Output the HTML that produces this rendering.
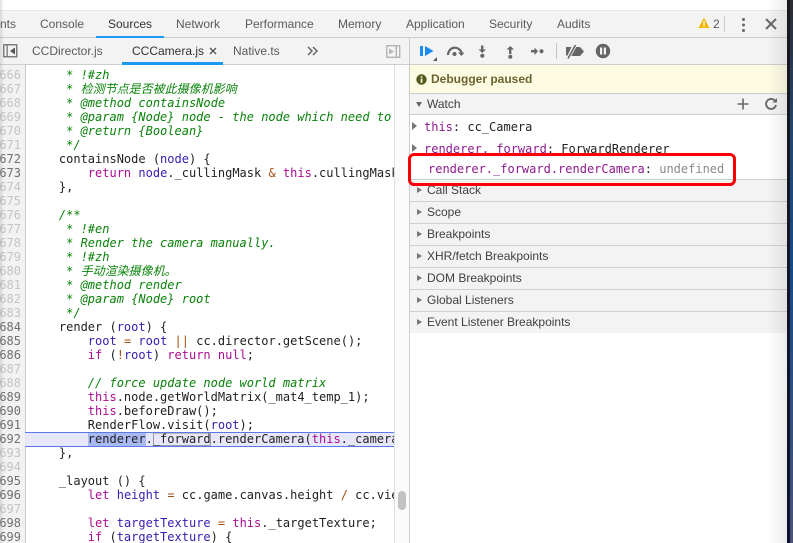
<!DOCTYPE html>
<html style="height:543px;overflow:hidden"><head><meta charset="utf-8">
<style>
html,body{margin:0;padding:0}
body{width:793px;height:543px;overflow:hidden;position:relative;background:#fff;font-family:"Liberation Sans","Noto Sans CJK SC",sans-serif;font-size:12px;color:#5a5a5a}
.a{position:absolute}
.t{position:absolute;white-space:nowrap;line-height:14px}
.m{font-family:"DejaVu Sans Mono","Liberation Mono","Noto Sans CJK SC",monospace;font-size:12px}
#code{position:absolute;left:30px;top:68px;height:475px;overflow:hidden;line-height:14px;color:#222;font-family:"DejaVu Sans Mono","Liberation Mono",monospace;font-size:12px}
#code div{height:14px;width:364px;overflow:hidden;white-space:pre}
#nums{position:absolute;left:0;top:68px;width:21px;text-align:right;line-height:14px;color:#c4c4c4;font-family:"DejaVu Sans Mono",monospace;font-size:12px}
#nums div{height:14px;direction:rtl}
#nums b{font-weight:normal;color:#707070}
.c{color:#0a820a;font-style:italic;font-family:"DejaVu Sans Mono","Noto Sans CJK SC",monospace}
.k{color:#aa0d91}
.v{color:#3a1bb0}
.o{color:#a8500f}
.sec{position:absolute;left:410px;width:377px;height:21px;background:#f3f3f3;border-top:1px solid #d0d0d0;line-height:21px;color:#3f3f3f}
.sec span{position:absolute;left:17px;top:0}
.sec i{position:absolute;left:7px;top:7px;width:0;height:0;border-left:5px solid #777;border-top:3.5px solid transparent;border-bottom:3.5px solid transparent}
.w{color:#8f1a8f}
</style></head>
<body>
<!-- top bar -->
<div class="a" style="left:0;top:10px;width:787px;height:27px;background:#f3f3f3;border-top:1px solid #e6e6e6;box-sizing:border-box"></div>
<div class="a" style="left:0;top:37px;width:787px;height:1px;background:#cdcdcd"></div>
<div class="t" style="left:0;top:17px">nts</div>
<div class="t" style="left:40px;top:17px">Console</div>
<div class="t" style="left:108px;top:17px;color:#333">Sources</div>
<div class="t" style="left:176px;top:17px">Network</div>
<div class="t" style="left:245px;top:17px">Performance</div>
<div class="t" style="left:338px;top:17px">Memory</div>
<div class="t" style="left:406px;top:17px">Application</div>
<div class="t" style="left:489px;top:17px">Security</div>
<div class="t" style="left:557px;top:17px">Audits</div>
<div class="a" style="left:96px;top:36px;width:68px;height:2px;background:#1a9bf0"></div>
<svg class="a" style="left:698px;top:17px" width="12" height="12" viewBox="0 0 12 12"><path d="M6 .8 11.5 11H.5z" fill="#f4b400"/><rect x="5.4" y="4" width="1.3" height="4" fill="#fff"/><rect x="5.4" y="8.7" width="1.3" height="1.3" fill="#fff"/></svg>
<div class="t" style="left:713px;top:17px">2</div>
<div class="a" style="left:724px;top:16px;width:1px;height:16px;background:#ccc"></div>
<div class="a" style="left:742px;top:18px;width:3px;height:3px;border-radius:2px;background:#666;box-shadow:0 5.5px 0 #666,0 11px 0 #666"></div>
<svg class="a" style="left:765px;top:18px" width="12" height="12" viewBox="0 0 12 12"><path d="M1 1 11 11M11 1 1 11" stroke="#666" stroke-width="2"/></svg>

<!-- second row left -->
<div class="a" style="left:0;top:38px;width:409px;height:26px;background:#f3f3f3"></div>
<div class="a" style="left:0;top:64px;width:409px;height:1px;background:#cdcdcd"></div>
<svg class="a" style="left:3px;top:44px" width="16" height="14" viewBox="0 0 16 14"><rect x=".75" y=".75" width="13" height="12" fill="none" stroke="#777" stroke-width="1.4"/><rect x="3.5" y="1" width="1.3" height="12" fill="#777"/><path d="M12 3.5v7L7 7z" fill="#555"/></svg>
<div class="t" style="left:32px;top:44px">CCDirector.js</div>
<div class="t" style="left:132px;top:44px;color:#333">CCCamera.js</div>
<svg class="a" style="left:209px;top:47px" width="8" height="8" viewBox="0 0 8 8"><path d="M1 1 7 7M7 1 1 7" stroke="#555" stroke-width="1.4"/></svg>
<div class="t" style="left:233px;top:44px">Native.ts</div>
<svg class="a" style="left:307px;top:46px" width="11" height="10" viewBox="0 0 11 10"><path d="M1 1 5 5 1 9M6 1 10 5 6 9" fill="none" stroke="#666" stroke-width="1.5"/></svg>
<div class="a" style="left:122px;top:62px;width:101px;height:3px;background:#1a9bf0"></div>
<svg class="a" style="left:386px;top:45px" width="15" height="13" viewBox="0 0 15 13"><rect x=".75" y=".75" width="13" height="11.5" fill="none" stroke="#aaa" stroke-width="1.2"/><rect x="9.7" y="1" width="1.2" height="11" fill="#aaa"/><path d="M3 3.5v6L8 6.500z" fill="#b5b5b5"/></svg>

<!-- gutter -->
<div class="a" style="left:0;top:65px;width:25px;height:478px;background:#f2f2f2;border-right:1px solid #c8c8c8"></div>
<!-- highlighted line -->
<div class="a" style="left:25px;top:432px;width:369px;height:15px;background:#e7e7fb;border-top:1px solid #5a78e6;border-bottom:1px solid #5a78e6;box-sizing:border-box"></div>
<div class="a" style="left:88px;top:433px;width:58px;height:13px;background:#a9b9f2"></div>
<div class="a" style="left:153px;top:433px;width:58px;height:13px;border:1px solid #9a9aaa;border-top:1px solid #bbb;box-sizing:border-box;background:#e7e7fb"></div>

<div id="nums"><div>666</div><div>667</div><div>668</div><div>669</div><div>670</div><div>671</div><div><b>672</b></div><div><b>673</b></div><div>674</div><div>675</div><div>676</div><div>677</div><div>678</div><div>679</div><div>680</div><div>681</div><div>682</div><div>683</div><div><b>684</b></div><div><b>685</b></div><div><b>686</b></div><div>687</div><div>688</div><div><b>689</b></div><div><b>690</b></div><div><b>691</b></div><div><b>692</b></div><div>693</div><div>694</div><div><b>695</b></div><div><b>696</b></div><div>697</div><div><b>698</b></div><div><b>699</b></div></div>

<div id="code"><div class="c">     * !#zh</div>
<div class="c">     * 检测节点是否被此摄像机影响</div>
<div class="c">     * @method containsNode</div>
<div class="c">     * @param {Node} node - the node which need to</div>
<div class="c">     * @return {Boolean}</div>
<div class="c">     */</div>
<div>    containsNode (<span class="v">node</span>) {</div>
<div>        <span class="k">return</span> <span class="v">node</span>._cullingMask <span class="o">&amp;</span> <span class="k">this</span>.cullingMask</div>
<div>    },</div>
<div> </div>
<div class="c">    /**</div>
<div class="c">     * !#en</div>
<div class="c">     * Render the camera manually.</div>
<div class="c">     * !#zh</div>
<div class="c">     * 手动渲染摄像机。</div>
<div class="c">     * @method render</div>
<div class="c">     * @param {Node} root</div>
<div class="c">     */</div>
<div>    render (<span class="v">root</span>) {</div>
<div>        <span class="v">root</span> <span class="o">=</span> <span class="v">root</span> <span class="o">||</span> cc.director.getScene();</div>
<div>        <span class="k">if</span> (<span class="o">!</span><span class="v">root</span>) <span class="k">return</span> <span class="k">null</span>;</div>
<div> </div>
<div class="c">        // force update node world matrix</div>
<div>        <span class="k">this</span>.node.getWorldMatrix(_mat4_temp_1);</div>
<div>        <span class="k">this</span>.beforeDraw();</div>
<div>        RenderFlow.visit(<span class="v">root</span>);</div>
<div>        renderer._forward.renderCamera(<span class="k">this</span>._camera</div>
<div>    },</div>
<div> </div>
<div>    _layout () {</div>
<div>        <span class="k">let</span> <span class="v">height</span> <span class="o">=</span> cc.game.canvas.height <span class="o">/</span> cc.view</div>
<div> </div>
<div>        <span class="k">let</span> <span class="v">targetTexture</span> <span class="o">=</span> <span class="k">this</span>._targetTexture;</div>
<div>        <span class="k">if</span> (<span class="v">targetTexture</span>) {</div></div>

<!-- code scrollbar -->
<div class="a" style="left:394px;top:65px;width:15px;height:478px;background:#fafafa;border-left:1px solid #e0e0e0;box-sizing:border-box"></div>
<div class="a" style="left:398px;top:491px;width:8px;height:19px;border-radius:4px;background:#c2c2c2"></div>

<!-- right pane -->
<div class="a" style="left:409px;top:38px;width:1px;height:505px;background:#cdcdcd"></div>
<div class="a" style="left:410px;top:38px;width:377px;height:26px;background:#f3f3f3"></div>
<div class="a" style="left:410px;top:64px;width:377px;height:1px;background:#cdcdcd"></div>
<svg class="a" style="left:418px;top:42px" width="200" height="20" viewBox="418 42 200 20">
<rect x="420" y="46" width="3" height="10" fill="#1a8cf0"/><path d="M425 46v10l8.500-5z" fill="#1a8cf0"/>
<path d="M437 57v4h-4z" fill="#555"/>
<path d="M448 55c.5-9 11-9.500 13.500-2.500" fill="none" stroke="#666" stroke-width="2.200"/><path d="M458 52.500h6.500l-3 3.500z" fill="#666"/><circle cx="454.500" cy="54" r="2" fill="#666"/>
<rect x="481" y="45.500" width="2.400" height="5" fill="#666"/><path d="M478.500 49.500h7.500l-3.750 3.500z" fill="#666"/><circle cx="482.300" cy="55.800" r="2" fill="#666"/>
<path d="M506.500 49.500h7.500l-3.750-3.500z" fill="#666"/><rect x="509" y="49" width="2.400" height="5" fill="#666"/><circle cx="510.300" cy="56.800" r="2" fill="#666"/>
<rect x="531" y="50" width="4" height="2.400" fill="#666"/><path d="M534.500 47.500v7.500l3.500-3.750z" fill="#666"/><circle cx="541.500" cy="51.200" r="2" fill="#666"/>
<rect x="556" y="43" width="1" height="16" fill="#c4c4c4"/>
<path d="M566 47h5.500l-4 8.500H566zM574 47h6l4 4.500-4 4.500h-10z" fill="#666"/><path d="M577 44.500 569 59" stroke="#f3f3f3" stroke-width="1.200"/><path d="M575.500 45 568 58.500" stroke="#666" stroke-width="1.600"/>
<circle cx="603" cy="51" r="7.200" fill="#666"/><rect x="600" y="47.500" width="2.200" height="7" fill="#f3f3f3"/><rect x="603.800" y="47.500" width="2.200" height="7" fill="#f3f3f3"/>
</svg>
<!-- paused banner -->
<div class="a" style="left:410px;top:65px;width:377px;height:28px;background:#fefbe3"></div>
<div class="a" style="left:410px;top:93px;width:377px;height:1px;background:#cdcdcd"></div>
<svg class="a" style="left:416px;top:74px" width="11" height="11" viewBox="0 0 11 11"><circle cx="5.500" cy="5.500" r="5.200" fill="#4f5a1c"/><rect x="4.700" y="4.500" width="1.700" height="4.300" fill="#fefbe3"/><rect x="4.700" y="2.200" width="1.700" height="1.500" fill="#fefbe3"/></svg>
<div class="t" style="left:431px;top:72px;font-weight:bold;color:#6b6431">Debugger paused</div>
<!-- watch header -->
<div class="a" style="left:410px;top:94px;width:377px;height:20px;background:#f3f3f3"></div>
<div class="a" style="left:410px;top:114px;width:377px;height:1px;background:#cdcdcd"></div>
<div class="a" style="left:416px;top:102px;width:0;height:0;border-top:5px solid #666;border-left:3.500px solid transparent;border-right:3.500px solid transparent"></div>
<div class="t" style="left:427px;top:97px;color:#3f3f3f">Watch</div>
<svg class="a" style="left:737px;top:98px" width="12" height="12" viewBox="0 0 12 12"><path d="M6 .5v11M.5 6h11" stroke="#666" stroke-width="1.600"/></svg>
<svg class="a" style="left:764px;top:97px" width="14" height="14" viewBox="0 0 14 14"><path d="M11.500 4.500A5 5 0 1 0 12 8" fill="none" stroke="#666" stroke-width="1.900"/><path d="M8.500 5.500h4.500V1z" fill="#666"/></svg>
<!-- watch items -->
<div class="a" style="left:412px;top:122px;width:0;height:0;border-left:5px solid #777;border-top:4px solid transparent;border-bottom:4px solid transparent"></div>
<div class="t m" style="left:424px;top:120px"><span class="w">this</span><span style="color:#222">: cc_Camera</span></div>
<div class="a" style="left:412px;top:144px;width:0;height:0;border-left:5px solid #777;border-top:4px solid transparent;border-bottom:4px solid transparent"></div>
<div class="t m" style="left:424px;top:142px"><span class="w">renderer._forward</span><span style="color:#222">: ForwardRenderer</span></div>
<div class="t m" style="left:428px;top:162px"><span class="w">renderer._forward.renderCamera</span><span style="color:#222">:</span> <span style="color:#8a8a8a">undefined</span></div>
<!-- sections -->
<div class="sec" style="top:179px"><i></i><span>Call Stack</span></div>
<div class="sec" style="top:201px"><i></i><span>Scope</span></div>
<div class="sec" style="top:223px"><i></i><span>Breakpoints</span></div>
<div class="sec" style="top:245px"><i></i><span>XHR/fetch Breakpoints</span></div>
<div class="sec" style="top:267px"><i></i><span>DOM Breakpoints</span></div>
<div class="sec" style="top:289px"><i></i><span>Global Listeners</span></div>
<div class="sec" style="top:311px"><i></i><span>Event Listener Breakpoints</span></div>
<!-- red box -->
<div class="a" style="left:408px;top:153px;width:328px;height:33px;border:3px solid #fb0007;border-radius:6px;box-sizing:border-box"></div>
<!-- edge shadow & window edge -->
<div class="a" style="left:767px;top:0;width:20px;height:543px;background:linear-gradient(to right,rgba(120,120,120,0),rgba(120,120,120,.14))"></div>
<div class="a" style="left:0;top:0;width:4px;height:543px;background:linear-gradient(to right,rgba(120,120,120,.22),rgba(120,120,120,0))"></div>
<div class="a" style="left:787px;top:0;width:3px;height:543px;background:linear-gradient(#1a1a1e,#0b1230)"></div>
<div class="a" style="left:790px;top:0;width:3px;height:543px;background:linear-gradient(#2b2b32 0,#24466f 25%,#154a86 50%,#4c5276 100%)"></div>
</body></html>
